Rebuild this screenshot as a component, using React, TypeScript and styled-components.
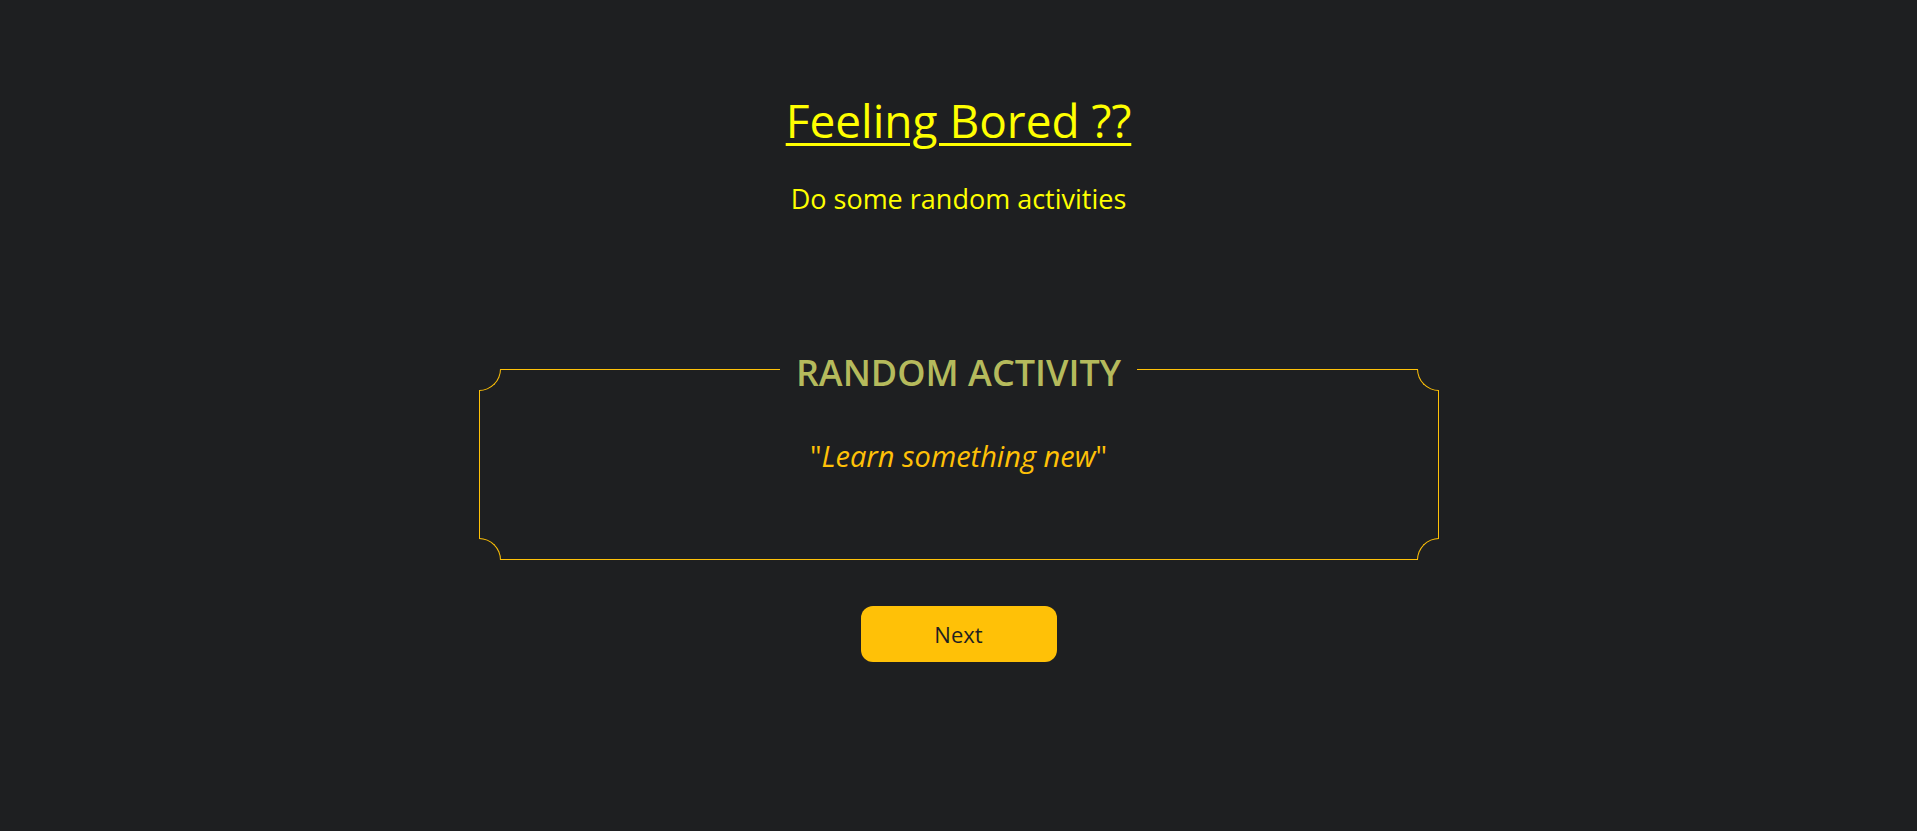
import React from "react";
import styled, { createGlobalStyle } from "styled-components";

const GlobalStyle = createGlobalStyle`
  html, body {
    margin: 0;
    padding: 0;
    background: #1e1f21;
  }
  body {
    font-family: "Open Sans", "Noto Sans", sans-serif;
    min-height: 831px;
  }
`;

const Page = styled.main`
  display: flex;
  flex-direction: column;
  align-items: center;
  padding-top: 88px;
  min-height: 831px;
  box-sizing: border-box;
  background: #1e1f21;
`;

const Heading = styled.h1`
  margin: 0;
  font-size: 46px;
  font-weight: 400;
  line-height: 64px;
  color: #ffff00;
  text-decoration: underline;
  text-decoration-thickness: 3px;
  text-underline-offset: 5px;
`;

const Subtitle = styled.p`
  margin: 27px 0 0;
  font-size: 27px;
  line-height: 40px;
  color: #ffff00;
`;

const Frame = styled.section`
  position: relative;
  box-sizing: border-box;
  width: 960px;
  height: 191px;
  margin-top: 150px;
  border: 1px solid #ffc107;
  display: flex;
  flex-direction: column;
  align-items: center;
`;

const Corner = styled.span<{ $v: "top" | "bottom"; $h: "left" | "right" }>`
  position: absolute;
  width: 22px;
  height: 22px;
  box-sizing: border-box;
  background: #1e1f21;
  ${(p) => p.$v}: -1px;
  ${(p) => p.$h}: -1px;
  border-${(p) => (p.$v === "top" ? "bottom" : "top")}: 1px solid #ffc107;
  border-${(p) => (p.$h === "left" ? "right" : "left")}: 1px solid #ffc107;
  border-${(p) => (p.$v === "top" ? "bottom" : "top")}-${(p) =>
    p.$h === "left" ? "right" : "left"}-radius: 22px;
`;

const Legend = styled.h2`
  margin: -19px 0 0;
  padding: 0 16px;
  background: #1e1f21;
  font-size: 36px;
  font-weight: 600;
  line-height: 44px;
  color: #b5ba5c;
  position: relative;
  z-index: 1;
`;

const Quote = styled.p`
  margin: 41px 0 0;
  font-size: 29px;
  line-height: 40px;
  color: #ffc107;
  em {
    font-style: italic;
  }
`;

const NextButton = styled.button`
  margin-top: 46px;
  width: 196px;
  height: 56px;
  border: none;
  border-radius: 12px;
  background: #ffc107;
  color: #1e1f21;
  font-family: "Open Sans", "Noto Sans", sans-serif;
  font-size: 22px;
  cursor: pointer;
`;

export default function App() {
  return (
    <>
      <GlobalStyle />
      <Page>
        <Heading>Feeling Bored ??</Heading>
        <Subtitle>Do some random activities</Subtitle>
        <Frame>
          <Corner $v="top" $h="left" />
          <Corner $v="top" $h="right" />
          <Corner $v="bottom" $h="left" />
          <Corner $v="bottom" $h="right" />
          <Legend>RANDOM ACTIVITY</Legend>
          <Quote>
            "<em>Learn something new</em>"
          </Quote>
        </Frame>
        <NextButton>Next</NextButton>
      </Page>
    </>
  );
}
